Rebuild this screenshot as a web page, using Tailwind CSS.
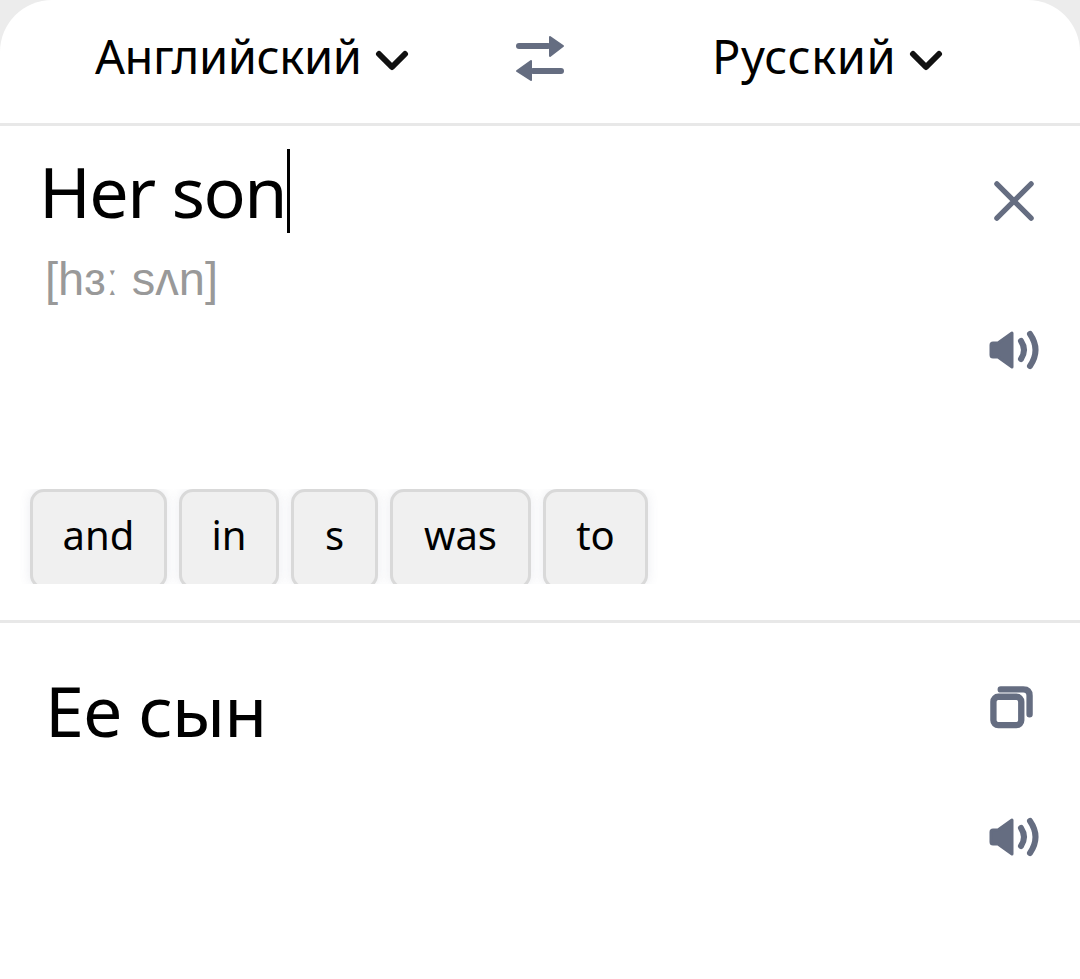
<!DOCTYPE html>
<html><head><meta charset="utf-8"><script src="https://cdn.jsdelivr.net/npm/@tailwindcss/browser@4"></script></head>
<body class="bg-[#ececec] m-0">
<div class="w-[1080px] h-[979px] bg-white rounded-t-[52px] overflow-hidden font-['Noto_Sans',sans-serif] text-black flex flex-col">
  <header class="h-[126px] shrink-0 border-b-[3px] border-[#e8e8e8] flex items-center relative pb-[11px]">
    <div class="w-[504px] pl-[95px] flex items-center gap-[13px]">
      <span class="text-[47px] leading-[60px] tracking-[-0.4px]">Английский</span>
      <svg class="mt-[9px]" width="34" height="22" viewBox="0 0 34 22" fill="none" stroke="#111" stroke-width="6" stroke-linecap="round" stroke-linejoin="round"><path d="M4 4 L17 17 L30 4"/></svg>
    </div>
    <svg class="w-[72px] shrink-0 mt-[6px]" width="72" height="48" viewBox="0 0 72 48" fill="#656d81"><rect x="12" y="8" width="35" height="6" rx="3"/><path d="M46 2 L59 11 L46 21Z" stroke="#656d81" stroke-width="2" stroke-linejoin="round"/><rect x="26" y="33" width="34" height="6" rx="3"/><path d="M27 26 L13 36 L27 45Z" stroke="#656d81" stroke-width="2" stroke-linejoin="round"/></svg>
    <div class="pl-[136px] flex items-center gap-[13px]">
      <span class="text-[47px] leading-[60px] tracking-[0.6px]">Русский</span>
      <svg class="mt-[9px]" width="34" height="22" viewBox="0 0 34 22" fill="none" stroke="#111" stroke-width="6" stroke-linecap="round" stroke-linejoin="round"><path d="M4 4 L17 17 L30 4"/></svg>
    </div>
  </header>
  <section class="h-[497px] shrink-0 border-b-[3px] border-[#e8e8e8] relative flex flex-col">
    <div class="flex justify-between pl-[39px] pr-[40px] pt-[23px]">
      <div class="flex flex-col">
        <div class="flex items-center h-[84px]">
          <span class="text-[70px] leading-[84px] tracking-[-1.5px]">Her son</span>
          <span class="w-[3px] h-[84px] bg-black ml-[1px]"></span>
        </div>
        <span class="text-[47px] leading-[60px] text-[#999] pl-[6px] mt-[16px] font-['Liberation_Sans',sans-serif]">[hɜː sʌn]</span>
      </div>
      <div class="flex flex-col items-end">
        <svg class="mt-[32px] mr-[6px]" width="40" height="40" viewBox="0 0 42 42" fill="none" stroke="#656d81" stroke-width="5.5" stroke-linecap="round"><path d="M3 3 L39 39 M39 3 L3 39"/></svg>
        <svg class="mt-[109px] mr-[1px]" width="50" height="40" viewBox="0 0 50 40" fill="#656d81"><path d="M2 15 Q2 13 4 13 H9 L23 3 V37 L9 27 H4 Q2 27 2 25Z" stroke="#656d81" stroke-width="3" stroke-linejoin="round"/><path d="M32 11 Q38 20 32 29" fill="none" stroke="#656d81" stroke-width="6" stroke-linecap="round"/><path d="M41 4 Q52 20 41 36" fill="none" stroke="#656d81" stroke-width="6" stroke-linecap="round"/></svg>
      </div>
    </div>
    <div class="absolute left-[18px] top-[363px] w-[642px] h-[95px] overflow-hidden">
      <div class="flex gap-[12px] px-[12px] text-[40px] h-[100px]">
        <div class="w-[137px] h-[100px] bg-[#f0f0f0] border-[3px] border-[#d9d9d9] rounded-[14px] flex items-center justify-center pb-[9px] shadow-[0_0_12px_rgba(90,100,130,0.12)]">and</div>
        <div class="w-[100px] h-[100px] bg-[#f0f0f0] border-[3px] border-[#d9d9d9] rounded-[14px] flex items-center justify-center pb-[9px] shadow-[0_0_12px_rgba(90,100,130,0.12)]">in</div>
        <div class="w-[87px] h-[100px] bg-[#f0f0f0] border-[3px] border-[#d9d9d9] rounded-[14px] flex items-center justify-center pb-[9px] shadow-[0_0_12px_rgba(90,100,130,0.12)]">s</div>
        <div class="w-[141px] h-[100px] bg-[#f0f0f0] border-[3px] border-[#d9d9d9] rounded-[14px] flex items-center justify-center pb-[9px] shadow-[0_0_12px_rgba(90,100,130,0.12)]">was</div>
        <div class="w-[105px] h-[100px] bg-[#f0f0f0] border-[3px] border-[#d9d9d9] rounded-[14px] flex items-center justify-center pb-[9px] shadow-[0_0_12px_rgba(90,100,130,0.12)]">to</div>
      </div>
    </div>
  </section>
  <section class="flex justify-between pl-[45px] pr-[40px] pt-[39px]">
    <span class="text-[70px] leading-[96px] tracking-[-1px]">Ee сын</span>
    <div class="flex flex-col items-end">
      <svg class="mt-[24px] mr-[7px]" width="43" height="43" viewBox="0 0 44 44" fill="none" stroke="#656d81" stroke-width="6.5" stroke-linecap="round" stroke-linejoin="round"><rect x="3.5" y="11" width="28.5" height="29" rx="5"/><path d="M11 3.5 H34 Q40.5 3.5 40.5 10 V29"/></svg>
      <svg class="mt-[88px] mr-[1px]" width="50" height="40" viewBox="0 0 50 40" fill="#656d81"><path d="M2 15 Q2 13 4 13 H9 L23 3 V37 L9 27 H4 Q2 27 2 25Z" stroke="#656d81" stroke-width="3" stroke-linejoin="round"/><path d="M32 11 Q38 20 32 29" fill="none" stroke="#656d81" stroke-width="6" stroke-linecap="round"/><path d="M41 4 Q52 20 41 36" fill="none" stroke="#656d81" stroke-width="6" stroke-linecap="round"/></svg>
    </div>
  </section>
</div>
</body></html>
